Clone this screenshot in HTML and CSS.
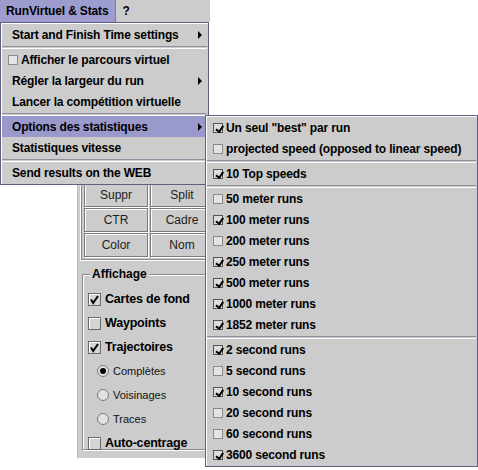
FILE: index.html
```html
<!DOCTYPE html>
<html>
<head>
<meta charset="utf-8">
<link rel="stylesheet" href="styles.css">
</head>
<body>
<div class="screen">
  <div class="menubar">
    <div class="mb-item active">RunVirtuel &amp; Stats</div>
    <div class="mb-item">?</div>
  </div>

  <div class="workspace">
    <div class="panel">
      <div class="btn-grid">
        <div class="btn">Suppr</div>
        <div class="btn">Split</div>
        <div class="btn">CTR</div>
        <div class="btn">Cadre</div>
        <div class="btn">Color</div>
        <div class="btn">Nom</div>
      </div>
      <fieldset class="group">
        <legend class="group-title">Affichage</legend>
        <div class="opt"><span class="cb on"><svg width="13" height="13" viewBox="0 0 13 13"><path d="M3 6.5 L5.2 10 L10 3" fill="none" stroke="#000" stroke-width="2"/></svg></span>Cartes de fond</div>
        <div class="opt"><span class="cb"></span>Waypoints</div>
        <div class="opt"><span class="cb on"><svg width="13" height="13" viewBox="0 0 13 13"><path d="M3 6.5 L5.2 10 L10 3" fill="none" stroke="#000" stroke-width="2"/></svg></span>Trajectoires</div>
        <div class="radio-opt"><span class="radio sel"></span>Complètes</div>
        <div class="radio-opt"><span class="radio"></span>Voisinages</div>
        <div class="radio-opt"><span class="radio"></span>Traces</div>
        <div class="opt"><span class="cb"></span>Auto-centrage</div>
      </fieldset>
    </div>
  </div>

  <div class="popup main-menu">
    <div class="mi sub">Start and Finish Time settings<span class="arrow"></span></div>
    <div class="sep"></div>
    <div class="mi chk"><span class="mcb"></span>Afficher le parcours virtuel</div>
    <div class="mi sub">Régler la largeur du run<span class="arrow"></span></div>
    <div class="mi">Lancer la compétition virtuelle</div>
    <div class="sep"></div>
    <div class="mi sub hl">Options des statistiques<span class="arrow"></span></div>
    <div class="mi">Statistiques vitesse</div>
    <div class="sep"></div>
    <div class="mi">Send results on the WEB</div>
  </div>

  <div class="popup sub-menu">
    <div class="mi chk"><span class="mcb on"></span>Un seul "best" par run</div>
    <div class="mi chk"><span class="mcb"></span>projected speed (opposed to linear speed)</div>
    <div class="sep"></div>
    <div class="mi chk"><span class="mcb on"></span>10 Top speeds</div>
    <div class="sep"></div>
    <div class="mi chk"><span class="mcb"></span>50 meter runs</div>
    <div class="mi chk"><span class="mcb on"></span>100 meter runs</div>
    <div class="mi chk"><span class="mcb"></span>200 meter runs</div>
    <div class="mi chk"><span class="mcb on"></span>250 meter runs</div>
    <div class="mi chk"><span class="mcb on"></span>500 meter runs</div>
    <div class="mi chk"><span class="mcb on"></span>1000 meter runs</div>
    <div class="mi chk"><span class="mcb on"></span>1852 meter runs</div>
    <div class="sep"></div>
    <div class="mi chk"><span class="mcb on"></span>2 second runs</div>
    <div class="mi chk"><span class="mcb"></span>5 second runs</div>
    <div class="mi chk"><span class="mcb on"></span>10 second runs</div>
    <div class="mi chk"><span class="mcb"></span>20 second runs</div>
    <div class="mi chk"><span class="mcb"></span>60 second runs</div>
    <div class="mi chk"><span class="mcb on"></span>3600 second runs</div>
  </div>
</div>
</body>
</html>
```

FILE: styles.css
```css
html, body {
  margin: 0;
  padding: 0;
  background: #ffffff;
}
.screen {
  position: relative;
  width: 478px;
  height: 470px;
  overflow: hidden;
  font-family: "Liberation Sans", Arial, sans-serif;
  color: #000;
}

/* menu bar */
.menubar {
  width: 210px;
  height: 22px;
  background: #cccccc;
  display: flex;
  align-items: stretch;
}
.mb-item {
  font-weight: bold;
  font-size: 12px;
  letter-spacing: -0.15px;
  display: flex;
  align-items: center;
  padding: 0 7px 0 6px;
}
.mb-item.active {
  background: #9c9cce;
  border-right: 1px solid #7a7aa8;
  padding-right: 7px;
}

/* background workspace */
.workspace {
  padding-left: 77px;
  padding-top: 159px;
}
.panel {
  width: 140px;
  height: 277px;
  background: #cccccc;
  border-left: 1px solid #bbbbbb;
  box-sizing: border-box;
  padding: 2px 0 0 3px;
}
.btn-grid {
  display: grid;
  grid-template-columns: 64px 64px;
  grid-auto-rows: 24px;
  column-gap: 2px;
  row-gap: 1px;
  padding: 0 0 2px 2px;
  border-left: 1px solid #888;
  border-bottom: 1px solid #888;
  box-shadow: -1px 1px 0 #fff;
  width: 140px;
}
.btn {
  border: 1px solid #7c7c7c;
  box-shadow: inset 1px 1px 0 #ffffff, 1px 1px 0 #ffffff;
  background: #cccccc;
  font-size: 12px;
  color: #222;
  display: flex;
  align-items: center;
  justify-content: center;
  box-sizing: border-box;
}
.group {
  margin: 7px 0 0 1px;
  padding: 6px 0 0 5px;
  border: 1px solid #8a8a8a;
  box-shadow: inset 1px 1px 0 #fff, 1px 1px 0 #fff;
  height: 183px;
  width: 140px;
  box-sizing: border-box;
}
.group-title {
  font-weight: bold;
  font-size: 12px;
  padding: 0 2px;
  margin-left: 2px;
  background: #cccccc;
}
.opt {
  height: 24px;
  display: flex;
  align-items: center;
  font-weight: bold;
  font-size: 12.5px;
  letter-spacing: -0.2px;
}
.cb {
  width: 13px;
  height: 13px;
  box-sizing: border-box;
  border: 1px solid #6a6a6a;
  box-shadow: inset 1px 1px 0 #fff;
  background: #d4d4d4;
  margin-right: 4px;
  flex: none;
  display: block;
  position: relative;
}
.cb svg {
  position: absolute;
  left: -1px;
  top: -1px;
}
.radio-opt {
  height: 24px;
  display: flex;
  align-items: center;
  font-size: 11px;
  padding-left: 9px;
  color: #111;
}
.radio {
  width: 12px;
  height: 12px;
  box-sizing: border-box;
  border-radius: 50%;
  border: 1px solid #7a7a7a;
  background: #e2e2e2;
  margin-right: 4px;
  flex: none;
  display: flex;
  align-items: center;
  justify-content: center;
}
.radio.sel::after {
  content: "";
  width: 6px;
  height: 6px;
  border-radius: 50%;
  background: #000;
}

/* popup menus */
.popup {
  position: absolute;
  background: #cccccc;
  border: 1px solid #5f5f7f;
  box-shadow: inset 1px 1px 0 #ffffff;
  padding: 1px 1px 1px 1px;
  box-sizing: border-box;
}
.main-menu {
  left: 0;
  top: 22px;
  width: 209px;
}
.sub-menu {
  left: 205px;
  top: 115px;
  width: 273px;
}
.mi {
  height: 21px;
  display: flex;
  align-items: center;
  font-weight: bold;
  font-size: 12px;
  letter-spacing: -0.15px;
  padding-left: 10px;
  position: relative;
  white-space: nowrap;
}
.mi.chk {
  padding-left: 6px;
}
.mi.hl {
  background: #9999cc;
}
.arrow {
  position: absolute;
  right: 5px;
  top: 7px;
  width: 0;
  height: 0;
  border-top: 4px solid transparent;
  border-bottom: 4px solid transparent;
  border-left: 4px solid #000;
}
.sep {
  box-sizing: border-box;
  border-top: 1px solid #8e8e9e;
  border-bottom: 1px solid #ffffff;
  margin: 1px 0 0;
  height: 3px;
}
.mcb {
  width: 10px;
  height: 10px;
  box-sizing: border-box;
  border: 1px solid #8a8a8a;
  background: #e4e4e4;
  margin-right: 3px;
  flex: none;
  position: relative;
}
.mcb.on {
  border-color: #555;
  background: #dcdcdc;
}
.mcb.on::after {
  content: "";
  position: absolute;
  left: 1px;
  top: 0px;
  width: 3px;
  height: 6px;
  border-right: 2px solid #000;
  border-bottom: 2px solid #000;
  transform: rotate(35deg) translate(2px, -1px);
}
```
